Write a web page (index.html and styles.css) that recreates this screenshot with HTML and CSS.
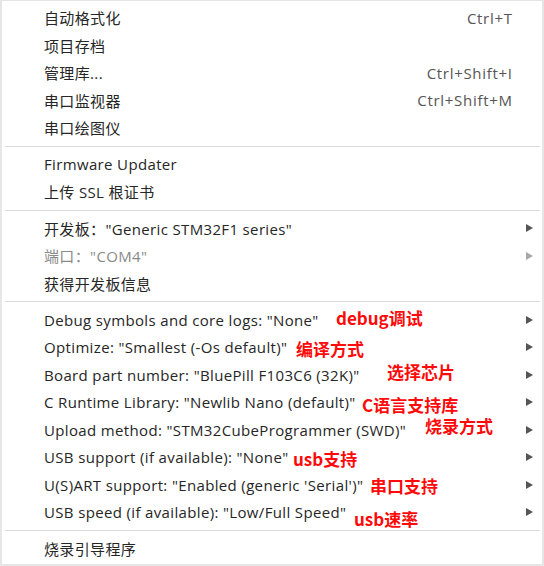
FILE: index.html
```html
<!DOCTYPE html>
<html lang="zh-CN">
<head>
<meta charset="utf-8">
<link rel="stylesheet" href="styles.css">
</head>
<body>
<div class="menu">
  <div class="item"><span class="label">自动格式化</span><span class="key">Ctrl+T</span><span class="arrow"></span></div>
  <div class="item"><span class="label">项目存档</span><span class="key"></span><span class="arrow"></span></div>
  <div class="item"><span class="label">管理库...</span><span class="key">Ctrl+Shift+I</span><span class="arrow"></span></div>
  <div class="item"><span class="label">串口监视器</span><span class="key">Ctrl+Shift+M</span><span class="arrow"></span></div>
  <div class="item"><span class="label">串口绘图仪</span><span class="key"></span><span class="arrow"></span></div>
  <div class="sep"></div>
  <div class="item"><span class="label">Firmware Updater</span><span class="key"></span><span class="arrow"></span></div>
  <div class="item"><span class="label">上传 SSL 根证书</span><span class="key"></span><span class="arrow"></span></div>
  <div class="sep"></div>
  <div class="item"><span class="label">开发板："Generic STM32F1 series"</span><span class="key"></span><span class="arrow"><i class="tri"></i></span></div>
  <div class="item disabled"><span class="label">端口："COM4"</span><span class="key"></span><span class="arrow"><i class="tri"></i></span></div>
  <div class="item"><span class="label">获得开发板信息</span><span class="key"></span><span class="arrow"></span></div>
  <div class="sep"></div>
  <div class="item"><span class="label">Debug symbols and core logs: "None"</span><span class="key"></span><span class="arrow"><i class="tri"></i></span></div>
  <div class="item"><span class="label">Optimize: "Smallest (-Os default)"</span><span class="key"></span><span class="arrow"><i class="tri"></i></span></div>
  <div class="item"><span class="label">Board part number: "BluePill F103C6 (32K)"</span><span class="key"></span><span class="arrow"><i class="tri"></i></span></div>
  <div class="item"><span class="label">C Runtime Library: "Newlib Nano (default)"</span><span class="key"></span><span class="arrow"><i class="tri"></i></span></div>
  <div class="item"><span class="label">Upload method: "STM32CubeProgrammer (SWD)"</span><span class="key"></span><span class="arrow"><i class="tri"></i></span></div>
  <div class="item"><span class="label">USB support (if available): "None"</span><span class="key"></span><span class="arrow"><i class="tri"></i></span></div>
  <div class="item"><span class="label">U(S)ART support: "Enabled (generic 'Serial')"</span><span class="key"></span><span class="arrow"><i class="tri"></i></span></div>
  <div class="item"><span class="label">USB speed (if available): "Low/Full Speed"</span><span class="key"></span><span class="arrow"><i class="tri"></i></span></div>
  <div class="sep"></div>
  <div class="item"><span class="label">烧录引导程序</span><span class="key"></span><span class="arrow"></span></div>

  <span class="note n1">debug调试</span>
  <span class="note n2">编译方式</span>
  <span class="note n3">选择芯片</span>
  <span class="note n4">C语言支持库</span>
  <span class="note n5">烧录方式</span>
  <span class="note n6">usb支持</span>
  <span class="note n7">串口支持</span>
  <span class="note n8">usb速率</span>
</div>
</body>
</html>
```
FILE: styles.css
```css
html, body {
  margin: 0;
  padding: 0;
}
body {
  background: #e6e6e6;
  width: 544px;
  height: 566px;
  overflow: hidden;
  font-family: "Open Sans", "Noto Sans CJK SC", sans-serif;
  font-size: 15px;
  color: #262626;
}
.menu {
  position: relative;
  box-sizing: border-box;
  margin: 1px 2px 0 2px;
  width: 540px;
  height: 563px;
  background: #fff;
  padding: 3px 0 0 0;
}
.item {
  display: flex;
  align-items: center;
  height: 27.5px;
  padding-left: 42px;
  white-space: nowrap;
}
.label {
  flex: 1;
  letter-spacing: 0.35px;
}
.key {
  color: #555;
  letter-spacing: 0.7px;
  margin-right: -0.7px;
}
.arrow {
  width: 30px;
  display: flex;
  align-items: center;
  padding-left: 14px;
  box-sizing: border-box;
}
.tri {
  width: 0;
  height: 0;
  border-top: 4.5px solid transparent;
  border-bottom: 4.5px solid transparent;
  border-left: 7px solid #555;
}
.disabled .label {
  color: #8a8a8a;
}
.disabled .tri {
  border-left-color: #a8a8a8;
}
.sep {
  height: 1px;
  margin: 4px 2px 4px 3px;
  background: #dcdcdc;
}
.note {
  position: absolute;
  font-family: "Noto Sans CJK SC", sans-serif;
  font-weight: bold;
  font-size: 17px;
  line-height: 20px;
  color: #ff0a0a;
  white-space: nowrap;
}
.n1 { left: 334px; top: 307px; }
.n2 { left: 294px; top: 338px; }
.n3 { left: 385px; top: 361px; }
.n4 { left: 360px; top: 394px; }
.n5 { left: 423px; top: 415px; }
.n6 { left: 291px; top: 448px; }
.n7 { left: 368px; top: 475px; }
.n8 { left: 352px; top: 508px; }
```
